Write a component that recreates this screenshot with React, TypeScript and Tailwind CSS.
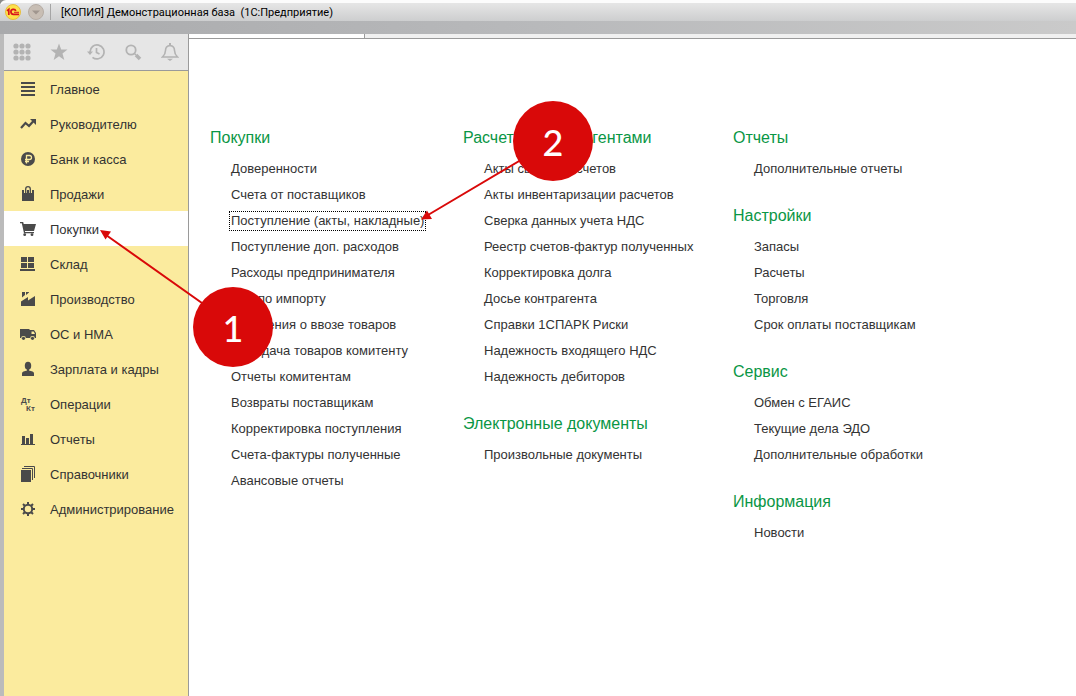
import React from "react";

const G = "#4a4a4a";

function MenuIcon({ children }: { children: React.ReactNode }) {
  return (
    <svg width="16" height="17" viewBox="0 0 16 17" fill={G} className="shrink-0" aria-hidden="true">
      {children}
    </svg>
  );
}

function ToolIcon({ children }: { children: React.ReactNode }) {
  return (
    <svg width="18" height="18" viewBox="0 0 18 18" fill="#b3b3b3" aria-hidden="true">
      {children}
    </svg>
  );
}

const menu: { label: string; icon: React.ReactNode; active?: boolean }[] = [
  { label: "Главное", icon: <path d="M1 2h14v2H1zM1 6h14v2H1zM1 10h14v2H1zM1 14h14v2H1z" /> },
  {
    label: "Руководителю",
    icon: (
      <>
        <path d="M1 13 5.500 8 9 11 13.500 6" fill="none" stroke={G} strokeWidth="2.200" />
        <path d="M10 4h6v6z" />
      </>
    ),
  },
  {
    label: "Банк и касса",
    icon: (
      <>
        <circle cx="8" cy="9" r="7" />
        <path d="M6.500 13.500V5.500H9.500a2 2 0 0 1 0 4H5M5 11.500h4" fill="none" stroke="#fbeb9e" strokeWidth="1.300" />
      </>
    ),
  },
  {
    label: "Продажи",
    icon: (
      <>
        <path d="M2 5h12v11H2z" />
        <path d="M5.500 8V4.200a2.500 2.500 0 0 1 5 0V8" fill="none" stroke="#fbeb9e" strokeWidth="3" />
        <path d="M5.700 8V4a2.300 2.300 0 0 1 4.600 0V8" fill="none" stroke={G} strokeWidth="1.300" />
        <path d="M7 5h2v4H7z" />
      </>
    ),
  },
  {
    label: "Покупки",
    active: true,
    icon: (
      <>
        <path d="M0 2h3.200L3.700 4H16L14 11H5v1h9v1.200H4L1.800 3.300H0z" />
        <circle cx="4.700" cy="14.700" r="1.400" />
        <circle cx="12" cy="14.700" r="1.400" />
      </>
    ),
  },
  { label: "Склад", icon: <path d="M1 2h6v5H1zM8 2h6v5H8zM1 8h6v5H1zM8 8h6v5H8zM0 14h15v2H0z" /> },
  {
    label: "Производство",
    icon: <path d="M1 16V11.500L8 7V10.500L15 6V16zM2 2h3V5L2 7.500zM6 2h3V2.500L6 5z" />,
  },
  {
    label: "ОС и НМА",
    icon: (
      <>
        <path d="M0 4h9.500v9H0zM9 5h5l2 3v5H9z" />
        <path d="M11.500 6.500h2.200L15 9h-3.500z" fill="#fbeb9e" />
        <circle cx="3.500" cy="13.300" r="2.400" fill="#fbeb9e" />
        <circle cx="12.500" cy="13.300" r="2.400" fill="#fbeb9e" />
        <circle cx="3.500" cy="13.300" r="1.600" />
        <circle cx="12.500" cy="13.300" r="1.600" />
      </>
    ),
  },
  {
    label: "Зарплата и кадры",
    icon: (
      <>
        <ellipse cx="8" cy="5.800" rx="3.200" ry="4" />
        <path d="M7 8h2v2.500l3.500 1Q14 12 14 13.500V16H2v-2.500Q2 12 3.500 11.500L7 10.500z" />
      </>
    ),
  },
  {
    label: "Операции",
    icon: (
      <g fontFamily="Liberation Sans, sans-serif" fontSize="8" fontWeight="700">
        <text x="1" y="8">Дт</text>
        <text x="6" y="16">Кт</text>
      </g>
    ),
  },
  { label: "Отчеты", icon: <path d="M2 6h3v8H2zM6 8h3v6H6zM10 4h3v10h-3zM1 14h14v1H1z" /> },
  {
    label: "Справочники",
    icon: (
      <>
        <path d="M1 5h10v12H1z" />
        <path d="M2 3.500h10.500V15M4 1.500h10.500V13" fill="none" stroke={G} />
      </>
    ),
  },
  {
    label: "Администрирование",
    icon: (
      <>
        <circle cx="8" cy="9" r="4.200" fill="none" stroke={G} strokeWidth="2" />
        <path d="M8 2v3M8 13v3M1 9h3M12 9h3M3 4l2 2M11 12l2 2M3 14l2-2M11 6l2-2" stroke={G} strokeWidth="2" />
      </>
    ),
  },
];

const tools: { label: string; icon: React.ReactNode }[] = [
  {
    label: "Меню функций",
    icon: [3, 9, 15].flatMap((x) => [3, 9, 15].map((y) => <circle key={`${x}-${y}`} cx={x} cy={y} r="2.600" />)),
  },
  { label: "Избранное", icon: <path d="M9 .500 11.200 6.500H17.500L12.500 10.500 14.300 17 9 13.200 3.700 17 5.500 10.500.500 6.500H6.800z" /> },
  {
    label: "История",
    icon: (
      <>
        <path d="M3 9.500V9a7 7 0 1 1 2.500 5.300M9.500 5v4.500l3 1.500" fill="none" stroke="#b3b3b3" strokeWidth="1.700" />
        <path d="M0 8.500h6L3 12z" />
      </>
    ),
  },
  {
    label: "Поиск",
    icon: (
      <>
        <circle cx="7" cy="7" r="4.700" fill="none" stroke="#b3b3b3" strokeWidth="1.800" />
        <path d="M10.500 10.500l1.500 1.500" stroke="#b3b3b3" strokeWidth="1.500" />
        <path d="M12 12l4 4" stroke="#b3b3b3" strokeWidth="3.500" />
      </>
    ),
  },
  {
    label: "Уведомления",
    icon: (
      <>
        <path d="M1.500 14Q4.500 11 4.500 7.500 4.500 3 9 2.500 13.500 3 13.500 7.500 13.500 11 16.500 14z" fill="none" stroke="#b3b3b3" strokeWidth="1.600" />
        <path d="M8 0h2v3H8zM6 15.800h6L9 18z" />
      </>
    ),
  },
];

type Section = { title: string; items: string[] };

const columns: Section[][] = [
  [
    {
      title: "Покупки",
      items: [
        "Доверенности",
        "Счета от поставщиков",
        "Поступление (акты, накладные)",
        "Поступление доп. расходов",
        "Расходы предпринимателя",
        "ГТД по импорту",
        "Заявления о ввозе товаров",
        "Передача товаров комитенту",
        "Отчеты комитентам",
        "Возвраты поставщикам",
        "Корректировка поступления",
        "Счета-фактуры полученные",
        "Авансовые отчеты",
      ],
    },
  ],
  [
    {
      title: "Расчеты с контрагентами",
      items: [
        "Акты сверки расчетов",
        "Акты инвентаризации расчетов",
        "Сверка данных учета НДС",
        "Реестр счетов-фактур полученных",
        "Корректировка долга",
        "Досье контрагента",
        "Справки 1СПАРК Риски",
        "Надежность входящего НДС",
        "Надежность дебиторов",
      ],
    },
    { title: "Электронные документы", items: ["Произвольные документы"] },
  ],
  [
    { title: "Отчеты", items: ["Дополнительные отчеты"] },
    { title: "Настройки", items: ["Запасы", "Расчеты", "Торговля", "Срок оплаты поставщикам"] },
    { title: "Сервис", items: ["Обмен с ЕГАИС", "Текущие дела ЭДО", "Дополнительные обработки"] },
    { title: "Информация", items: ["Новости"] },
  ],
];

const FOCUSED = "Поступление (акты, накладные)";

function TitleBar() {
  return (
    <header className="bg-[#8a8a8a]">
      <div className="flex h-[21px] items-center rounded-tl-md border-t-3 border-[#fcfcfc] bg-linear-to-b from-[#e6e6e6] to-[#cdcecf] pl-[5px]">
        <svg width="16" height="16" viewBox="0 0 16 16" className="shrink-0" aria-hidden="true">
          <circle cx="8" cy="8" r="7.500" fill="#fde14a" stroke="#e8bd3c" />
          <path d="M2 6.800 3.800 5.300V11M10.800 7A2.500 2.500 0 1 0 8.500 10.300H14" fill="none" stroke="#d8141c" strokeWidth="1.700" />
          <path d="M9 8.300h5" stroke="#d8141c" />
        </svg>
        <button aria-label="Команды окна" className="ml-[7px] shrink-0">
          <svg width="16" height="16" viewBox="0 0 16 16">
            <circle cx="8" cy="8" r="7.500" fill="#c8beb4" stroke="#b5aca4" />
            <path d="M4 6.500h8L8 10.500z" fill="#a0968e" />
          </svg>
        </button>
        <span className="ml-[6px] h-4 w-px bg-[#a5a5a5]" />
        <h1 className="ml-[10px] whitespace-pre pt-px font-['Roboto','Noto_Sans',sans-serif] text-[11px] leading-4 text-black">
          {"[КОПИЯ] Демонстрационная база  (1С:Предприятие)"}
        </h1>
      </div>
      <div className="h-[13px] bg-linear-to-r from-[#a9aaac] via-[#b8b9bb] to-[#cacaca]" />
    </header>
  );
}

function Badge({ n }: { n: number }) {
  return (
    <span className="flex size-[80px] items-center justify-center rounded-full bg-[#d90909] pt-[2px] font-['Lato','Open_Sans',sans-serif] text-[36px] leading-none font-medium text-white">
      {n}
    </span>
  );
}

export default function App() {
  return (
    <div className="relative flex min-h-screen flex-col bg-white font-['Liberation_Sans',Arial,sans-serif] text-[13px] text-[#333]">
      <TitleBar />
      <div className="flex flex-1 border-l-4 border-[#bbbbbb]">
        <aside className="flex w-[185px] shrink-0 flex-col border-r border-[#9a9a9a] bg-[#fbeb9e]">
          <div className="flex h-[37px] items-center justify-between border-b border-[#9a9a9a] bg-[#e6e6e6] px-[9px]">
            {tools.map((t) => (
              <button key={t.label} aria-label={t.label}>
                <ToolIcon>{t.icon}</ToolIcon>
              </button>
            ))}
          </div>
          <nav>
            {menu.map((m) => (
              <a
                key={m.label}
                href="#"
                className={
                  m.active
                    ? "flex h-[35px] items-center gap-[14px] bg-white pl-4"
                    : "flex h-[35px] items-center gap-[14px] pl-4"
                }
              >
                <MenuIcon>{m.icon}</MenuIcon>
                <span className="pt-[2px]">{m.label}</span>
              </a>
            ))}
          </nav>
        </aside>
        <main className="min-w-0 flex-1">
          <div className="h-[5px] border-b border-[#9a9a9a] bg-[#f0f0f0]">
            <div className="h-full w-[176px] border-r border-[#9a9a9a] bg-white" />
          </div>
          <div className="grid grid-cols-[253fr_270fr_343fr] pt-[87px] pl-[21px]">
            {columns.map((sections, i) => (
              <div key={i} className="flex flex-col gap-[22px]">
                {sections.map((s) => (
                  <section key={s.title}>
                    <h2 className="mb-[6px] text-[16px] leading-6 text-[#0a9645]">{s.title}</h2>
                    <ul className="pl-[19px]">
                      {s.items.map((item) => (
                        <li key={item} className="flex h-[26px] items-center">
                          <a
                            href="#"
                            className={
                              item === FOCUSED
                                ? "border border-dotted border-black px-px leading-[18px] whitespace-nowrap"
                                : "border border-transparent px-px leading-[18px] whitespace-nowrap"
                            }
                          >
                            {item}
                          </a>
                        </li>
                      ))}
                    </ul>
                  </section>
                ))}
              </div>
            ))}
          </div>
        </main>
      </div>
      <svg className="pointer-events-none absolute top-0 left-0" width="600" height="400" viewBox="0 0 600 400" aria-hidden="true">
        <path d="M233 325 106 235M553 141 428 215" stroke="#d90909" strokeWidth="2" />
        <path d="M100 230 111 231.500 105.500 239.500zM421 219.500 427 210.500 432 219z" fill="#d90909" />
      </svg>
      <div className="absolute top-[287px] left-[193px]"><Badge n={1} /></div>
      <div className="absolute top-[101px] left-[513px]"><Badge n={2} /></div>
    </div>
  );
}
